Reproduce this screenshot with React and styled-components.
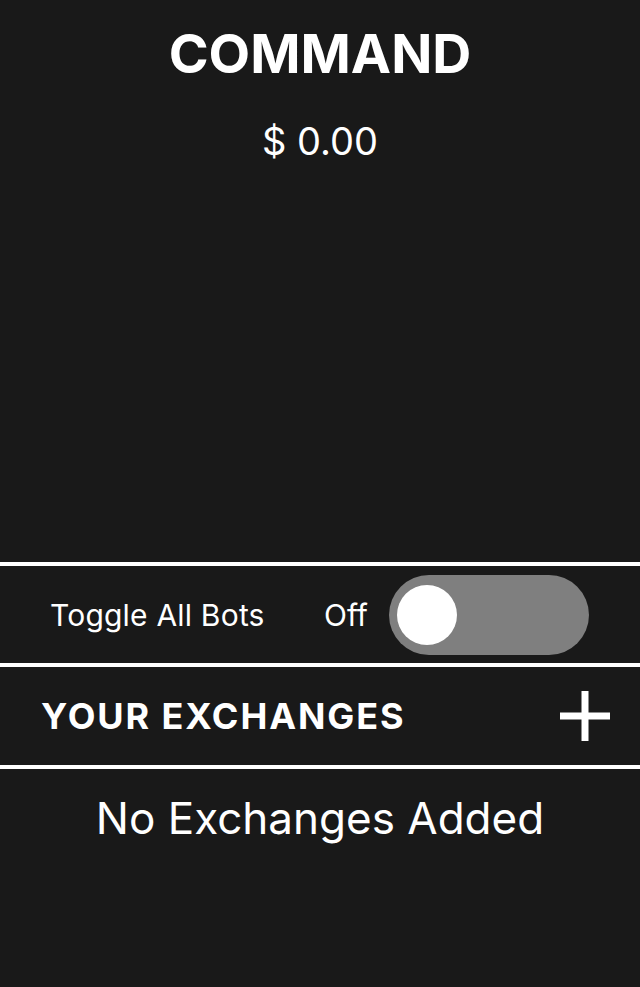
import React from "react";
import styled, { createGlobalStyle } from "styled-components";

const Global = createGlobalStyle`
  html, body { margin: 0; padding: 0; background: #191919; }
  body { font-family: Inter, "Noto Sans", sans-serif; color: #fff; }
  #root { min-height: 987px; }
`;

const Screen = styled.div`
  width: 640px;
  min-height: 987px;
  background: #191919;
  display: flex;
  flex-direction: column;
`;

const Header = styled.header`
  height: 562px;
  box-sizing: border-box;
  padding-top: 20px;
  display: flex;
  flex-direction: column;
  align-items: center;
`;

const Title = styled.h1`
  margin: 0;
  font-size: 54px;
  font-weight: 700;
  line-height: 68px;
  letter-spacing: 0;
`;

const Balance = styled.div`
  margin-top: 31px;
  font-size: 38px;
  font-weight: 400;
  line-height: 44px;
`;

const Section = styled.section`
  box-sizing: border-box;
  border-top: 4px solid #fff;
  height: ${(p) => p.$h}px;
  display: flex;
  align-items: center;
`;

const ToggleRow = styled(Section)`
  padding-left: 50px;
`;

const Label = styled.span`
  width: 274px;
  font-size: 30px;
  line-height: 36px;
  letter-spacing: 0.2px;
`;

const OffLabel = styled.span`
  width: 65px;
  font-size: 30px;
  line-height: 36px;
`;

const Switch = styled.div`
  width: 200px;
  height: 80px;
  border-radius: 40px;
  background: #7f7f7f;
  display: flex;
  align-items: center;
  padding-left: 8px;
  box-sizing: border-box;
`;

const Knob = styled.div`
  width: 60px;
  height: 60px;
  border-radius: 50%;
  background: #fff;
`;

const ExchangeRow = styled(Section)`
  padding: 0 30px 0 41px;
  justify-content: space-between;
`;

const SectionTitle = styled.h2`
  margin: 0;
  font-size: 36px;
  font-weight: 700;
  line-height: 42px;
  letter-spacing: 1.9px;
`;

const Empty = styled.div`
  border-top: 4px solid #fff;
  text-align: center;
  padding-top: 22px;
  font-size: 44px;
  line-height: 54px;
`;

export default function App() {
  return (
    <Screen>
      <Global />
      <Header>
        <Title>COMMAND</Title>
        <Balance>$ 0.00</Balance>
      </Header>
      <ToggleRow $h={101}>
        <Label>Toggle All Bots</Label>
        <OffLabel>Off</OffLabel>
        <Switch>
          <Knob />
        </Switch>
      </ToggleRow>
      <ExchangeRow $h={102}>
        <SectionTitle>YOUR EXCHANGES</SectionTitle>
        <svg width="50" height="50" viewBox="0 0 50 50">
          <rect x="21.5" y="0" width="7" height="50" fill="#fff" />
          <rect x="0" y="21.5" width="50" height="7" fill="#fff" />
        </svg>
      </ExchangeRow>
      <Empty>No Exchanges Added</Empty>
    </Screen>
  );
}
